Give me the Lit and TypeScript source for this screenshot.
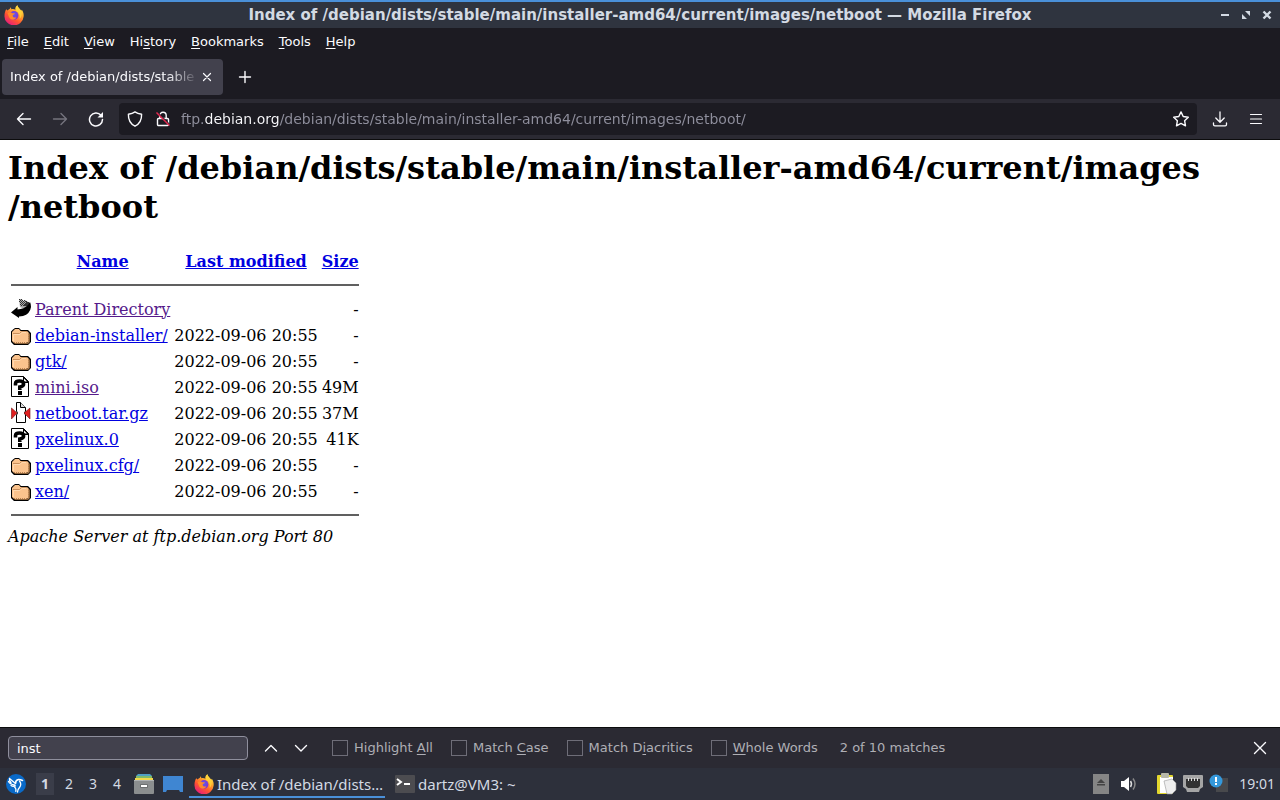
import { LitElement, html, svg, css, TemplateResult } from "lit";
import { customElement, state } from "lit/decorators.js";

type Entry = { kind: string; name: string; date: string; size: string; visited?: boolean };

const STAMP = "2022-09-06 20:55";
const ENTRIES: Entry[] = [
  { kind: "back", name: "Parent Directory", date: "", size: "-", visited: true },
  { kind: "folder", name: "debian-installer/", date: STAMP, size: "-" },
  { kind: "folder", name: "gtk/", date: STAMP, size: "-" },
  { kind: "unknown", name: "mini.iso", date: STAMP, size: "49M", visited: true },
  { kind: "compressed", name: "netboot.tar.gz", date: STAMP, size: "37M" },
  { kind: "unknown", name: "pxelinux.0", date: STAMP, size: "41K" },
  { kind: "folder", name: "pxelinux.cfg/", date: STAMP, size: "-" },
  { kind: "folder", name: "xen/", date: STAMP, size: "-" },
];

const box = (w: number, h: number, body: unknown) => html`<svg
  class="icon" width=${w} height=${h} viewBox="0 0 ${w} ${h}" aria-hidden="true">${body}</svg>`;

const line = (d: string, w = 1.4) => svg`<path d=${d} fill="none" stroke="currentColor"
  stroke-width=${w} stroke-linecap="round" stroke-linejoin="round"/>`;

const firefox = () => html`<svg class="icon" width="20" height="20" viewBox="0 0 20 20" aria-hidden="true">
  <defs>
    <linearGradient id="fx" x1="0.85" y1="0" x2="0.2" y2="1">
      <stop offset="0" stop-color="#fff44f"/><stop offset=".35" stop-color="#ffa62b"/>
      <stop offset=".65" stop-color="#ff5430"/><stop offset="1" stop-color="#e31587"/>
    </linearGradient>
    <radialGradient id="fg" cx=".5" cy=".4" r=".6">
      <stop offset="0" stop-color="#5a5bf0"/><stop offset="1" stop-color="#8a2fc8"/>
    </radialGradient>
  </defs>
  <path fill="url(#fx)" d="M2.2 4.2 3.6 5.6C4.300 4.700 5 4.200 5.600 4L6.800 2.200 7.400 4.200C9.200 3.800 10.400 4.200 11.500 4.800 11 3 11.800 1.200 13.400.200 13.600 2.600 16 3.600 17.300 5.800L17.800 4.800C19.500 7 20 9.600 19.500 12A9.500 8.800 0 0 1 .500 11C.400 8.400 1.200 6 2.200 4.200Z"/>
  <circle cx="10" cy="10.400" r="4.400" fill="url(#fg)"/>
  <path fill="#ff8a2a" d="M3.600 8.200C5 6.800 7 7 8.200 8.200 9.200 8.200 10.800 8 10.900 8.600 10.600 9.800 9 9.800 8.600 10.400 8.800 12.600 11 13 12.400 12.200 11.500 15 7.600 15.600 5.600 13 4.600 11.600 4.400 9.800 3.600 8.200Z"/>
  <path fill="#ffd43a" opacity=".85" d="M13.400.200C13.600 2.600 16 3.600 17.300 5.800 18.400 8.400 17.800 12 15.600 14 16.400 10.600 15.400 7.600 12.800 6.400 11 4.800 11.400 1.800 13.400.200Z"/>
</svg>`;

const fileIcon = (kind: string): TemplateResult => {
  switch (kind) {
    case "back":
      return box(20, 22, svg`
        <path fill="#aaa" d="M8 1H11L12 3 14 2 19 5V8L14 11 9 9Z"/>
        <g fill="#333" shape-rendering="crispEdges">
          <path d="M8 1h1v1h-1zM10 1h1v1h-1zM9 2h1v1h-1zM11 2h1v1h-1zM13 2h1v1h-1zM8 3h1v1h-1zM10 3h1v1h-1zM12 3h1v1h-1zM14 3h2v1h-2zM9 4h1v1h-1zM11 4h1v1h-1zM13 4h1v1h-1zM15 4h3v1h-3zM10 5h1v1h-1zM12 5h1v1h-1zM14 5h5v1h-5zM9 6h1v1h-1zM11 6h1v1h-1zM13 6h6v1h-6zM10 7h1v1h-1zM12 7h7v1h-7z"/>
        </g>
        <path fill="#000" d="M19 4Q20 6 20 9 19 16 12 18L8 18.500V20L0 14.500 6.500 9V11.500Q13 11 17 7Z"/>`);
    case "folder":
      return box(20, 22, svg`
        <path fill="#000" d="M2 5.500 4 4H8L10 6H17L20 9V18L17 21H3L0 18V7.500Z"/>
        <path fill="#8c6239" d="M17 8 19 10V18L17 20H4L3 19H17Z"/>
        <path fill="#fbc38d" d="M3 6 4 5H8L9.500 7H16L17.500 8.500V17.500L16 19H3L1 17V8Z"/>
        <path fill="none" stroke="#c98f5c" d="M2 9.500H8.500L10.500 7.500H16"/>
        <path fill="none" stroke="#ffd9b0" d="M2.500 17V10.500H9L11 8.500H15"/>
        <path fill="none" stroke="#b98252" stroke-dasharray="1 1" d="M3 18.500H17.500V9"/>`);
    case "unknown":
      return box(20, 22, svg`
        <path fill="#fff" stroke="#000" d="M.500 .500H12.500L17.500 5.500V20.500H.500Z"/>
        <path fill="#000" d="M12 0 18 6V7H12Z"/><path fill="#fff" d="M13 2.500V5.500H16Z"/>
        <path fill="none" stroke="#000" stroke-width="3.600" d="M4.500 9.500V7.500Q4.500 5 8.500 5 12.600 5 12.600 8 12.600 10.200 8.800 11V14"/>
        <path fill="#000" d="M7 15h4v4h-4z"/>`);
    default:
      return box(20, 22, svg`
        <path fill="#fff" stroke="#000" d="M5.500 .500H9.500L14.500 5.500V9L13.500 11 14.500 13V20.500H5.500V13L6.500 11 5.500 9Z"/>
        <path fill="#ddd" stroke="#000" d="M9.500 .500V5.500H14.500"/>
        <path fill="#e02020" stroke="#701010" stroke-width=".6" d="M.500 6 6 11 .500 17ZM19 6 13 11 19 17Z"/>`);
  }
};

@customElement("app-root")
export class AppRoot extends LitElement {
  static styles = css`
    :host { display: flex; flex-direction: column; height: 100vh; overflow: hidden;
      font: 13px/16px "DejaVu Sans", sans-serif; color: #fbfbfe; background: #1c1b22; }
    * { box-sizing: border-box; }
    button { all: unset; box-sizing: border-box; display: flex; align-items: center; justify-content: center; cursor: default; }
    .icon { display: block; flex: none; }
    u { text-underline-offset: 2px; }

    .title { display: grid; grid-template-columns: 60px 1fr 60px; align-items: center; height: 28px;
      border-top: 2px solid #4a90d9; background: #2f343f; padding: 0 4px; }
    .title-text { text-align: center; font-weight: bold; font-size: 15px; color: #d3dae3; white-space: nowrap; }
    .window-buttons { display: flex; justify-content: flex-end; gap: 9px; padding-right: 3px; color: #d3dae3; }

    .menu { display: flex; gap: 1px; height: 27px; }
    .menu button { padding: 0 7px; }

    .tabs { display: flex; align-items: center; height: 44px; padding: 0 2px; gap: 4px; }
    .tab { display: flex; align-items: center; width: 221px; height: 36px; border-radius: 4px; background: #42414d; padding: 0 8px; }
    .tab-label { flex: 1; justify-content: flex-start; white-space: nowrap;
      -webkit-mask-image: linear-gradient(to left, transparent, #000 32px); }
    .tab-close { width: 16px; height: 20px; }
    .new-tab { width: 36px; height: 36px; }

    .nav { display: flex; align-items: center; height: 41px; padding: 0 6px; background: #2b2a33; border-bottom: 1px solid #0c0c0d; }
    .tool { width: 36px; height: 32px; }
    .dim { color: #75747e; }
    .url { display: flex; align-items: center; flex: 1; height: 32px; margin: 0 5px; border-radius: 4px; background: #1c1b22; padding: 0 2px; }
    .url-button { width: 28px; height: 28px; }
    .address { flex: 1; min-width: 0; margin-left: 4px; padding: 0; border: 0; outline: 0; font: inherit; font-size: 14px; height: 20px; color: #8f8f9d;
      background: linear-gradient(to right, #8f8f9d 24px, #fbfbfe 24px, #fbfbfe 99px, #8f8f9d 99px);
      -webkit-background-clip: text; background-clip: text; -webkit-text-fill-color: transparent; }

    .page { flex: 1; min-height: 0; overflow: auto; padding: 9px 8px 8px; background: #fff; color: #000;
      font: 16px/19px "DejaVu Serif", serif; }
    h1 { margin: 0 0 20px; font-size: 32px; line-height: 39px; font-weight: bold; }
    table { border-spacing: 2px; }
    th, td { padding: 1px; }
    .entry { height: 24px; }
    .head { height: 24px; }
    .right { text-align: right; }
    hr { margin: 8px 0; border: 0; height: 2px; background: #606060; }
    a { color: #0000e0; }
    .visited { color: #551a8b; }
    address { font-style: italic; }

    .find { display: flex; align-items: center; height: 41px; padding: 0 8px; background: #2b2a33; border-top: 1px solid #0c0c0d; color: #afafb5; }
    .query { width: 240px; height: 24px; margin-right: 8px; padding: 0 8px; border: 1px solid #8f8f9d; border-radius: 4px;
      background: #42414d; color: #fbfbfe; font: inherit; outline: 0; }
    .step { width: 30px; height: 24px; color: #fbfbfe; }
    .options { display: flex; gap: 18px; margin: 0 22px 0 16px; }
    .option { display: flex; align-items: center; gap: 6px; white-space: nowrap; }
    .option input { appearance: none; width: 16px; height: 16px; margin: 0; border: 1px solid #6e6d78; background: #2b2a33; }
    .option input:checked { background: #00ddff; }
    .spacer { flex: 1; }
    .find-close { width: 24px; height: 24px; color: #fbfbfe; }

    .panel { display: flex; align-items: center; height: 32px; background: #2d303b; color: #d3dae3; padding: 0 5px;
      font: 14px/18px "Noto Sans", sans-serif; }
    .start { width: 22px; height: 32px; margin-right: 6px; }
    .desk { width: 24px; height: 24px; }
    .desk span { width: 18px; line-height: 22px; text-align: center; }
    .desk .current { background: #3a3d49; font-weight: bold; }
    .launch { width: 29px; height: 32px; }
    .tasks { display: flex; margin-left: 2px; }
    .task { width: 196px; height: 28px; justify-content: flex-start; gap: 3px; padding: 2px 5px 0; white-space: nowrap;
      font-size: 15px; border-bottom: 2px solid transparent; }
    .task.active { border-bottom-color: #4a90d9; }
    .tray { display: flex; align-items: center; gap: 8px; margin-right: 2px; }
    .clock { margin-left: 2px; }
  `;

  @state() private options = [
    { before: "Highlight ", key: "A", after: "ll", on: false },
    { before: "Match ", key: "C", after: "ase", on: false },
    { before: "Match D", key: "i", after: "acritics", on: false },
    { before: "", key: "W", after: "hole Words", on: false },
  ];

  private menus = [["", "F", "ile"], ["", "E", "dit"], ["", "V", "iew"], ["Hi", "s", "tory"],
    ["", "B", "ookmarks"], ["", "T", "ools"], ["", "H", "elp"]];

  private renderTitle() {
    return html`<header class="title">
      ${firefox()}
      <div class="title-text">Index of /debian/dists/stable/main/installer-amd64/current/images/netboot — Mozilla Firefox</div>
      <div class="window-buttons">
        <button aria-label="Minimize">${box(12, 12, svg`<path fill="currentColor" d="M2 5h8v2H2z"/>`)}</button>
        <button aria-label="Restore">${box(12, 12, svg`<path fill="currentColor" d="M5 2h5v5ZM2 5v5h5Z"/>`)}</button>
        <button aria-label="Close">${box(12, 12, svg`<path stroke="currentColor" stroke-width="2.400" d="M2.500 2.500l7 7M9.500 2.500l-7 7"/>`)}</button>
      </div>
    </header>`;
  }

  private renderNav() {
    return html`<nav class="nav">
      <button class="tool" aria-label="Back">${box(16, 16, line("M14.500 8H1.500M7 2.500L1.500 8L7 13.500"))}</button>
      <button class="tool dim" aria-label="Forward">${box(16, 16, line("M1.500 8H14.500M9 2.500L14.500 8L9 13.500"))}</button>
      <button class="tool" aria-label="Reload">${box(16, 16, svg`${line("M13 4.300A6.500 6.500 0 1 0 14.500 8.500", 1.500)}<path fill="currentColor" d="M15 1v5.500h-5.500z"/>`)}</button>
      <div class="url">
        <button class="url-button" aria-label="Tracking protection">${box(16, 16, line("M8 .900C10 2.300 12.200 2.900 14.600 3.300 14.800 9 12.500 13 8 15.200 3.500 13 1.200 9 1.400 3.300 3.800 2.900 6 2.300 8 .900Z"))}</button>
        <button class="url-button" aria-label="Connection not secure">${box(16, 16, svg`
          ${line("M4.800 7V4.500A3.200 3.200 0 0 1 11.200 4.500V7M3.500 7.500H12.500A1 1 0 0 1 13.500 8.500V13.500A1 1 0 0 1 12.500 14.500H3.500A1 1 0 0 1 2.500 13.500V8.500A1 1 0 0 1 3.500 7.500Z")}
          <path d="M2.500 1.500L15 14" stroke="#1c1b22" stroke-width="1.500"/>
          <path d="M1.500 1.500L14.500 14.500" stroke="#e22850" stroke-width="1.500"/>`)}</button>
        <input class="address" aria-label="Address" .value=${"ftp.debian.org/debian/dists/stable/main/installer-amd64/current/images/netboot/"} />
        <button class="url-button" aria-label="Bookmark">${box(16, 16, line("M8 .900L10.200 5.500 15.300 6.200 11.600 9.700 12.500 14.800 8 12.400 3.500 14.800 4.400 9.700 .700 6.200 5.800 5.500Z"))}</button>
      </div>
      <button class="tool" aria-label="Downloads">${box(16, 16, line("M8 1V11M3.800 7L8 11.200L12.200 7M1.500 12V13.500Q1.500 14.800 2.800 14.800H13.200Q14.500 14.800 14.500 13.500V12", 1.3))}</button>
      <button class="tool" aria-label="Menu">${box(16, 16, line("M2.500 3.500H13.500M2.500 8H13.500M2.500 12.500H13.500", 1.2))}</button>
    </nav>`;
  }

  private renderPage() {
    return html`<main class="page">
      <h1>Index of /debian/dists/stable/main/installer-amd64/current/images<wbr>/netboot</h1>
      <table>
        <tbody>
          <tr class="head"><th></th><th><a href="#name">Name</a></th><th><a href="#modified">Last modified</a></th><th><a href="#size">Size</a></th></tr>
          <tr><td colspan="4"><hr /></td></tr>
          ${ENTRIES.map((e) => html`<tr class="entry">
            <td>${fileIcon(e.kind)}</td>
            <td><a class=${e.visited ? "visited" : ""} href="#${e.name}">${e.name}</a></td>
            <td class="right">${e.date}</td>
            <td class="right">${e.size}</td>
          </tr>`)}
          <tr><td colspan="4"><hr /></td></tr>
        </tbody>
      </table>
      <address>Apache Server at ftp.debian.org Port 80</address>
    </main>`;
  }

  private renderFind() {
    return html`<div class="find">
      <input class="query" aria-label="Find in page" .value=${"inst"} />
      <button class="step" aria-label="Previous">${box(16, 16, line("M2.500 11L8 5.500L13.500 11"))}</button>
      <button class="step" aria-label="Next">${box(16, 16, line("M2.500 5.500L8 11L13.500 5.500"))}</button>
      <div class="options">
        ${this.options.map((o) => html`<label class="option"><input type="checkbox" .checked=${o.on} /><span>${o.before}<u>${o.key}</u>${o.after}</span></label>`)}
      </div>
      <span>2 of 10 matches</span>
      <span class="spacer"></span>
      <button class="find-close" aria-label="Close find bar">${box(16, 16, line("M2.500 2.500L13.500 13.500M13.500 2.500L2.500 13.500"))}</button>
    </div>`;
  }

  private renderPanel() {
    return html`<footer class="panel">
      <button class="start" aria-label="Applications">${box(20, 20, svg`
        <circle cx="10" cy="10" r="10" fill="#0a6ac8"/>
        <g fill="none" stroke="#fff" stroke-linecap="round" stroke-linejoin="round">
          <path stroke-width="1.300" d="M3.500 4.500 9.500 9.500M2.500 7.500Q4 10.500 8.500 10.800M3.500 4.500Q3 6.500 5 8.500M5 11.500Q7 12.800 9.500 11.800"/>
          <path stroke-width="1.600" d="M9.500 9.500Q9.500 6 12.500 5.500 14 5.300 16.500 6.500"/>
          <path stroke-width="1.300" d="M13.500 7Q16 10.500 13.500 13.500 11.500 15.500 11.500 18"/>
          <path stroke-width="1.200" d="M8.500 13Q10.500 14.500 9.800 17.500"/>
        </g>`)}</button>
      ${[1, 2, 3, 4].map((n) => html`<button class="desk"><span class=${n === 1 ? "current" : ""}>${n}</span></button>`)}
      <button class="launch" aria-label="File manager">${box(20, 20, svg`
        <path fill="#4f9fc4" d="M4 0H16L18 2H2Z"/><path fill="#7fb96a" d="M2 2H18V4H2Z"/><path fill="#f2d64b" d="M1 4H19V7H1Z"/>
        <rect y="6" width="20" height="14" rx="1" fill="#8b8e8f"/><rect y="6" width="20" height="1" fill="#b0b3b4"/>
        <rect x="6" y="10" width="8" height="4" rx="1" fill="#6c6f70"/><rect x="7" y="11" width="6" height="2" fill="#fff"/>`)}</button>
      <button class="launch" aria-label="Show desktop">${box(20, 16, svg`
        <path fill="#3f86d2" d="M0 0H20V16H17L16 14H4L3 16H0Z"/>`)}</button>
      <div class="tasks">
        <button class="task active">${firefox()}<span>Index of /debian/dists…</span></button>
        <button class="task">
          ${box(25, 18, svg`<rect x="5" width="20" height="18" rx="1" fill="#4c4c50"/>
            <path d="M7 4L11 7L7 10" fill="none" stroke="#fff" stroke-width="2"/><path d="M14 9H20" stroke="#fff" stroke-width="2"/>`)}
          <span>dartz@VM3: ~</span></button>
      </div>
      <span class="spacer"></span>
      <div class="tray">
        ${box(16, 20, svg`<rect width="16" height="20" fill="#858585"/><path fill="#444" d="M8 5l4 4H4ZM4 10h8v1.500H4z"/>`)}
        ${box(24, 16, svg`<path fill="#fff" d="M4 5H7L12 1V15L7 11H4Z"/><path fill="none" stroke="#ddd" stroke-width="1.500" d="M13.500 5Q15.500 8 13.500 11"/><path fill="none" stroke="#888" stroke-width="1.500" d="M16 2.500Q20 8 16 13.500"/>`)}
        ${box(32, 22, svg`<rect x="8" y="2" width="16" height="19" rx="1" fill="#e3d72e"/><path fill="#fff" d="M11 4H24V20H11Z"/><rect x="12" y="0" width="8" height="5" rx="1" fill="#b8b8a8"/>
          <path fill="#eee" stroke="#999" stroke-width=".6" d="M15 8 23 6 27 10V17L23 21H18Z"/>`)}
      </div>
      ${box(20, 18, svg`<path fill="#a5a5a5" d="M1 0H19Q20 0 20 1V12L17 14 16 17H4L3 14 0 12V1Q0 0 1 0Z"/><path fill="#333" d="M3 4H17V11L15 13H5L3 11Z"/><path stroke="#ddd" d="M5.500 3V6M8.500 3V6M11.500 3V6M14.500 3V6"/>`)}
      ${box(34, 20, svg`<rect x="13" y="4" width="12" height="14" fill="#48494c"/><circle cx="13" cy="7" r="6.500" fill="#3498db"/><path fill="#fff" d="M12 3h2v5h-2zM12 9h2v2h-2z"/>`)}
      <span class="clock">19:01</span>
    </footer>`;
  }

  render() {
    return html`
      ${this.renderTitle()}
      <div class="menu" role="menubar">${this.menus.map(([a, k, b]) => html`<button role="menuitem"><span>${a}<u>${k}</u>${b}</span></button>`)}</div>
      <div class="tabs">
        <div class="tab">
          <button class="tab-label">Index of /debian/dists/stable</button>
          <button class="tab-close" aria-label="Close tab">${box(10, 10, line("M1.500 1.500L8.500 8.500M8.500 1.500L1.500 8.500", 1.2))}</button>
        </div>
        <button class="new-tab" aria-label="New tab">${box(14, 14, line("M7 1.500V12.500M1.500 7H12.500"))}</button>
      </div>
      ${this.renderNav()} ${this.renderPage()} ${this.renderFind()} ${this.renderPanel()}
    `;
  }
}
